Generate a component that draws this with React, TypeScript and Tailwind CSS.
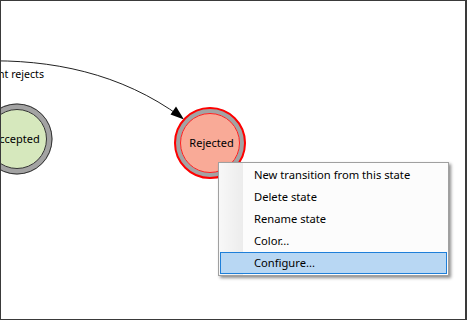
const menuItems = [
  "New transition from this state",
  "Delete state",
  "Rename state",
  "Color...",
  "Configure...",
];

const font = { fontFamily: "'Noto Sans', 'DejaVu Sans', sans-serif" };

function Diagram() {
  return (
    <svg
      className="absolute inset-0"
      width="100%"
      height="100%"
      style={font}
      fontSize="11"
    >
      <path
        d="M -20 60 C 50 58, 120 72, 180 116"
        fill="none"
        stroke="#222"
        strokeWidth="1"
      />
      <polygon points="183,118.5 169.5,113.5 175,105.5" fill="#000" />
      <text x="43" y="77" textAnchor="end" fill="#000" fontSize="10.6">
        Client rejects
      </text>

      {/* accepted state */}
      <circle cx="16" cy="138" r="32.5" fill="none" stroke="#a3a3a3" strokeWidth="6" />
      <circle cx="16" cy="138" r="35" fill="none" stroke="#333" strokeWidth="1" />
      <circle cx="16" cy="138" r="29.5" fill="#d6e8bd" stroke="#333" strokeWidth="1" />
      <text x="15" y="142" textAnchor="middle" fill="#000">
        Accepted
      </text>

      {/* rejected state */}
      <circle cx="209" cy="142" r="32.5" fill="none" stroke="#a3a3a3" strokeWidth="6" />
      <circle cx="209" cy="142" r="35" fill="none" stroke="#ff0000" strokeWidth="2" />
      <circle cx="209" cy="142" r="29.5" fill="#f9aa97" stroke="#ff2020" strokeWidth="1" />
      <text x="210.5" y="146" textAnchor="middle" fill="#000">
        Rejected
      </text>
    </svg>
  );
}

function ContextMenu() {
  return (
    <div
      className="absolute left-[217px] top-[161px] w-[231px] border border-[#a0a0a0] bg-[#fcfcfc] py-px shadow-[2px_2px_3px_rgba(0,0,0,0.45)]"
      style={font}
    >
      <div className="absolute left-0 top-0 h-full w-[24px] bg-gradient-to-r from-[#f8f8f8] to-[#ececec]" />
      {menuItems.map((item, i) => {
        const active = i === menuItems.length - 1;
        return (
          <div
            key={item}
            className={
              active
                ? "relative mx-px flex h-[22px] items-center border border-[#1e7fd9] bg-[#b8d7f3] pl-[33px] text-[11.2px] text-black"
                : "relative flex h-[22px] items-center pl-[35px] text-[11.2px] text-black"
            }
          >
            {item}
          </div>
        );
      })}
    </div>
  );
}

export default function App() {
  return (
    <div className="relative h-[320px] w-[467px] overflow-hidden border border-r-2 border-[#3a3a3a] bg-white">
      <Diagram />
      <ContextMenu />
    </div>
  );
}
